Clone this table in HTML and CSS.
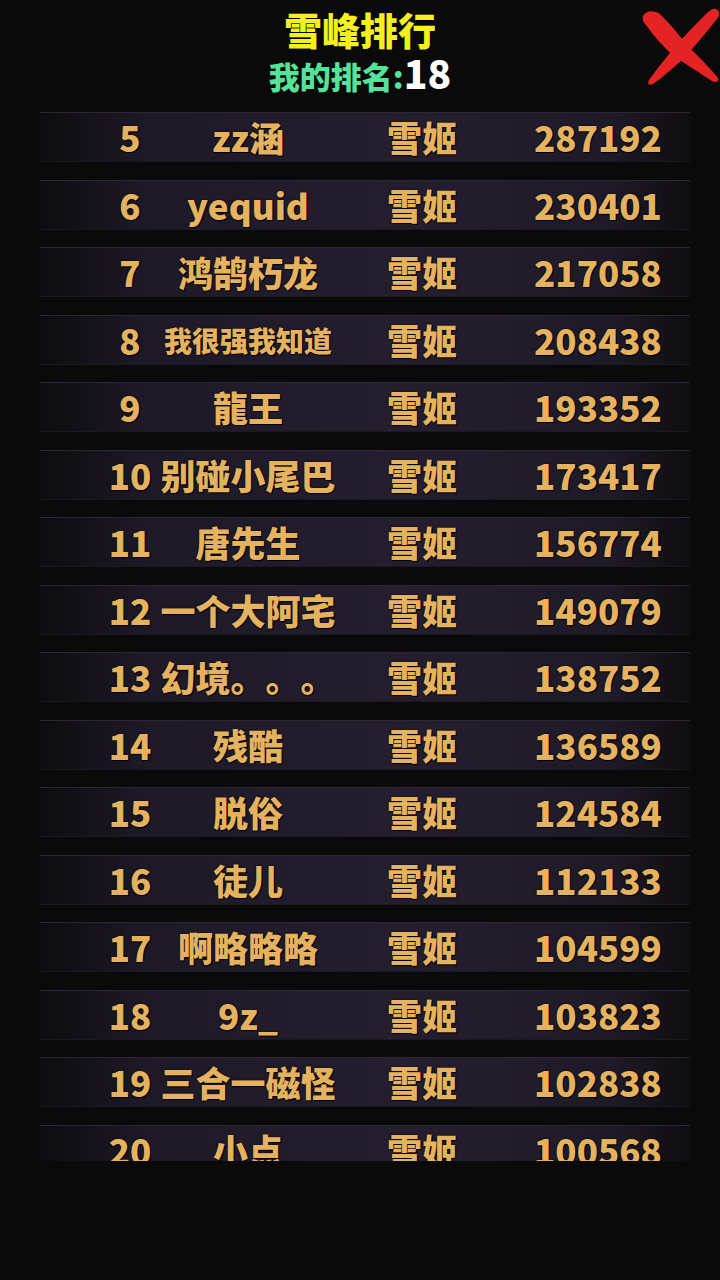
FILE: index.html
```html
<!DOCTYPE html>
<html lang="zh">
<head>
<meta charset="utf-8">
<link rel="stylesheet" href="styles.css">
</head>
<body>
<div class="screen">
  <header class="header">
    <div class="title">雪峰排行</div>
    <div class="myrank"><span class="label">我的排名:</span><span class="num">18</span></div>
    <svg class="close" viewBox="0 0 80 80" aria-label="关闭">
      <path d="M3 10 C6 4 14 4 20 8 C30 18 40 30 48 40 C60 52 70 62 78 72 C79 76 76 77 72 75 C58 66 46 58 36 52 C24 42 14 30 6 19 C3 16 2 13 3 10 Z" fill="#e42424"/>
      <path d="M76 3 C80 5 80 9 77 13 C68 24 58 36 48 48 C36 60 24 70 13 78 C9 80 7 78 9 74 C16 64 26 52 34 42 C44 30 56 18 66 8 C70 4 73 2 76 3 Z" fill="#e42424"/>
    </svg>
  </header>
  <div class="list">
    <div class="row"><span class="rank">5</span><span class="name">zz涵</span><span class="cls">雪姬</span><span class="score">287192</span></div>
    <div class="row"><span class="rank">6</span><span class="name">yequid</span><span class="cls">雪姬</span><span class="score">230401</span></div>
    <div class="row"><span class="rank">7</span><span class="name">鸿鹄朽龙</span><span class="cls">雪姬</span><span class="score">217058</span></div>
    <div class="row"><span class="rank">8</span><span class="name small">我很强我知道</span><span class="cls">雪姬</span><span class="score">208438</span></div>
    <div class="row"><span class="rank">9</span><span class="name">龍王</span><span class="cls">雪姬</span><span class="score">193352</span></div>
    <div class="row"><span class="rank">10</span><span class="name">别碰小尾巴</span><span class="cls">雪姬</span><span class="score">173417</span></div>
    <div class="row"><span class="rank">11</span><span class="name">唐先生</span><span class="cls">雪姬</span><span class="score">156774</span></div>
    <div class="row"><span class="rank">12</span><span class="name">一个大阿宅</span><span class="cls">雪姬</span><span class="score">149079</span></div>
    <div class="row"><span class="rank">13</span><span class="name">幻境。。。</span><span class="cls">雪姬</span><span class="score">138752</span></div>
    <div class="row"><span class="rank">14</span><span class="name">残酷</span><span class="cls">雪姬</span><span class="score">136589</span></div>
    <div class="row"><span class="rank">15</span><span class="name">脱俗</span><span class="cls">雪姬</span><span class="score">124584</span></div>
    <div class="row"><span class="rank">16</span><span class="name">徒儿</span><span class="cls">雪姬</span><span class="score">112133</span></div>
    <div class="row"><span class="rank">17</span><span class="name">啊略略略</span><span class="cls">雪姬</span><span class="score">104599</span></div>
    <div class="row"><span class="rank">18</span><span class="name">9z_</span><span class="cls">雪姬</span><span class="score">103823</span></div>
    <div class="row"><span class="rank">19</span><span class="name">三合一磁怪</span><span class="cls">雪姬</span><span class="score">102838</span></div>
    <div class="row"><span class="rank">20</span><span class="name">小点</span><span class="cls">雪姬</span><span class="score">100568</span></div>
  </div>
</div>
</body>
</html>
```
FILE: styles.css
```css
html, body {
  margin: 0;
  padding: 0;
  background: #0a0a0a;
}
.screen {
  width: 720px;
  height: 1280px;
  background: #0a0a0a;
  font-family: "Noto Sans CJK SC", "Noto Sans", sans-serif;
  font-weight: 900;
  overflow: hidden;
  text-spacing-trim: space-all;
}
.header {
  position: relative;
  height: 112px;
  display: flex;
  flex-direction: column;
  align-items: center;
}
.title {
  margin-top: 7px;
  font-size: 38px;
  line-height: 44px;
  color: #f4ef1e;
  text-shadow: 0 0 2px #000, 1px 1px 0 #000;
}
.myrank {
  margin-top: 2px;
  height: 38px;
  display: flex;
  align-items: baseline;
  text-shadow: 0 0 2px #000;
}
.myrank .label {
  font-size: 31px;
  line-height: 38px;
  color: #55e39b;
}
.myrank .num {
  font-size: 39px;
  line-height: 38px;
  color: #ffffff;
}
.close {
  position: absolute;
  left: 640px;
  top: 6px;
  width: 80px;
  height: 80px;
}
.list {
  height: 1049px;
  overflow: hidden;
  display: flex;
  flex-direction: column;
  gap: 17.5px;
}
.row {
  flex: none;
  margin-left: 40px;
  width: 650px;
  height: 48px;
  border-top: 1px solid #2d2735;
  border-bottom: 1px solid #1c1822;
  background: linear-gradient(90deg, rgba(30,25,38,0.15) 0%, #1e1927 16%, #241e2f 55%, #1f1a27 88%, rgba(25,21,30,0.3) 100%);
  display: grid;
  grid-template-columns: 50px 80px 156px 192px 160px;
  align-items: center;
  color: #e5b25f;
  font-size: 35px;
  line-height: 48px;
  white-space: nowrap;
  text-shadow: 0 0 2px #000, 1px 1px 0 #000;
}
.row > span {
  text-align: center;
}
.rank {
  grid-column: 2;
}
.name {
  grid-column: 3;
  display: flex;
  justify-content: center;
}
.name.small {
  font-size: 28px;
}
.cls {
  grid-column: 4;
}
.score {
  grid-column: 5;
}
```
